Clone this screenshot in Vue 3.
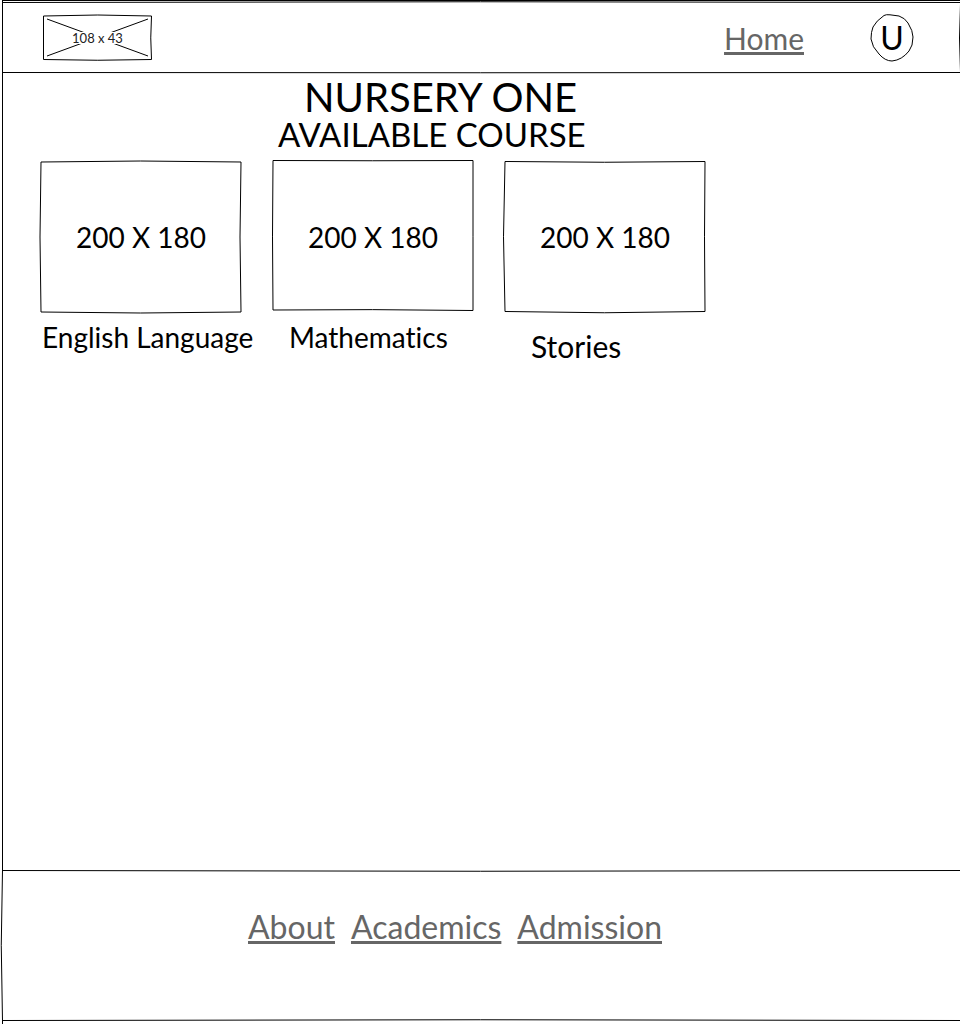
<script setup>
const courses = [
  {
    name: 'English Language',
    kind: 'english',
    outline: 'M1 2 Q100 0 201 2 Q199 77 201 152 Q100 154 1 152 Q-1 77 1 2',
  },
  {
    name: 'Mathematics',
    kind: 'maths',
    outline: 'M1 .5 Q100 1 201 .5 Q201 77 201 150.5 Q100 149 1 150 Q0 77 1 .5',
  },
  {
    name: 'Stories',
    kind: 'stories',
    outline: 'M1 1.5 Q100 3 201 1.5 Q200 77 201 151.5 Q100 154 1 151.5 Q-2 77 1 1.5',
  },
]
const footerLinks = ['About', 'Academics', 'Admission']
</script>

<template>
  <div class="page">
    <header class="bar">
      <svg class="frame" viewBox="0 0 960 74" preserveAspectRatio="none" aria-hidden="true">
        <path d="M2 .5 H960 M2 2.5 Q480 1 960 2.5 M2 72.5 Q480 73 960 72.5 M2.5 0 V74 M960.5 4 Q958.5 38 960.5 72" />
      </svg>
      <a class="logo" href="#" aria-label="108 x 43">
        <svg class="frame" viewBox="0 0 109 46" preserveAspectRatio="none" aria-hidden="true">
          <path d="M.5 1 Q55 -1 108.5 1 Q107 23 108.5 44.5 Q55 46 .5 44.5 Z M4 4 L105 41 M4 41 L105 4" />
        </svg>
        <span class="logo-text">108 x 43</span>
      </a>
      <nav aria-label="Main"><a class="link home" href="#">Home</a></nav>
      <button class="avatar" type="button">
        <svg class="frame" viewBox="0 0 44 48" aria-hidden="true">
          <path d="M14 1.5 Q16 .3 20 .8 L29 2 Q35 4 38 9 Q43 17 43 23 Q43 32 39 37 Q32 46 22 47 Q15 47 9 40 Q2 33 1 25 Q1 18 3 13 Q6 7 14 1.5 Z" />
        </svg>
        <span>U</span>
      </button>
    </header>

    <main class="content">
      <h1>NURSERY ONE</h1>
      <h2>AVAILABLE COURSE</h2>
      <ul class="courses">
        <li v-for="course in courses" :key="course.name" :class="['course', course.kind]">
          <div class="cover">
            <svg class="frame" viewBox="0 0 202 154" preserveAspectRatio="none" aria-hidden="true">
              <path :d="course.outline" />
            </svg>
            <span>200 X 180</span>
          </div>
          <h3>{{ course.name }}</h3>
        </li>
      </ul>
    </main>

    <footer class="footer">
      <svg class="frame" viewBox="0 0 960 154" preserveAspectRatio="none" aria-hidden="true">
        <path d="M2 .5 Q480 2 960 .5 M2.5 0 Q0 75 2.5 151 V154 M2 150.5 Q480 149 960 150.5" />
      </svg>
      <nav class="footer-nav" aria-label="Footer">
        <a v-for="label in footerLinks" :key="label" class="link" href="#">{{ label }}</a>
      </nav>
    </footer>
  </div>
</template>

<style>
body {
  margin: 0;
  background: #fff;
}
</style>

<style scoped>
* {
  box-sizing: border-box;
}
.page {
  display: flex;
  flex-direction: column;
  min-height: 100vh;
  overflow-x: hidden;
  color: #000;
  font-family: "Comic Sans MS", Lato, "Noto Sans", sans-serif;
  font-variant-ligatures: none;
}
.frame {
  position: absolute;
  inset: 0;
  width: 100%;
  height: 100%;
  overflow: visible;
  pointer-events: none;
}
.frame path {
  fill: none;
  stroke: #000;
  stroke-width: 1px;
  vector-effect: non-scaling-stroke;
}
.bar {
  position: relative;
  display: flex;
  align-items: center;
  min-height: 74px;
  padding: 2px 46px 0 43px;
}
.logo {
  position: relative;
  display: flex;
  align-items: center;
  justify-content: center;
  width: 109px;
  height: 46px;
  margin-right: auto;
  color: #222;
  text-decoration: none;
}
.logo-text {
  position: relative;
  background: #fff;
  font-size: 13px;
  line-height: 12px;
}
.link {
  color: #666;
  font-size: 32px;
  line-height: 40px;
  text-decoration: underline;
  text-decoration-thickness: 3px;
  text-underline-offset: 2px;
  text-decoration-skip-ink: none;
}
.home {
  font-size: 30px;
}
.avatar {
  position: relative;
  width: 44px;
  height: 48px;
  margin-left: 66px;
  padding: 0;
  border: 0;
  background: none;
  color: #000;
  font: 32px/40px "Comic Sans MS", Lato, sans-serif;
}
.content {
  flex: 1;
  padding: 3px 20px 20px 0;
  border-left: 1px solid #000;
  margin-left: 2px;
}
h1,
h2,
h3 {
  margin: 0;
  font-weight: 400;
  white-space: nowrap;
}
h1 {
  padding-left: 301px;
  font-size: 40px;
  line-height: 40px;
}
h2 {
  padding-left: 275px;
  font-size: 33px;
  line-height: 34px;
}
.courses {
  display: flex;
  gap: 30px;
  margin: 9px 0 0;
  padding: 0 0 0 37px;
  list-style: none;
}
.course {
  width: 202px;
}
.cover {
  position: relative;
  display: flex;
  align-items: center;
  justify-content: center;
  height: 154px;
  font-size: 28px;
}
h3 {
  padding-top: 5px;
  font-size: 28px;
  line-height: 36px;
}
.english h3 {
  padding-left: 2px;
}
.maths h3 {
  padding-left: 17px;
}
.stories h3 {
  padding-top: 14px;
  padding-left: 27px;
  font-size: 30px;
}
.footer {
  position: relative;
  min-height: 154px;
  padding: 37px 20px 40px 248px;
}
.footer-nav {
  display: flex;
  gap: 16px;
}
</style>
